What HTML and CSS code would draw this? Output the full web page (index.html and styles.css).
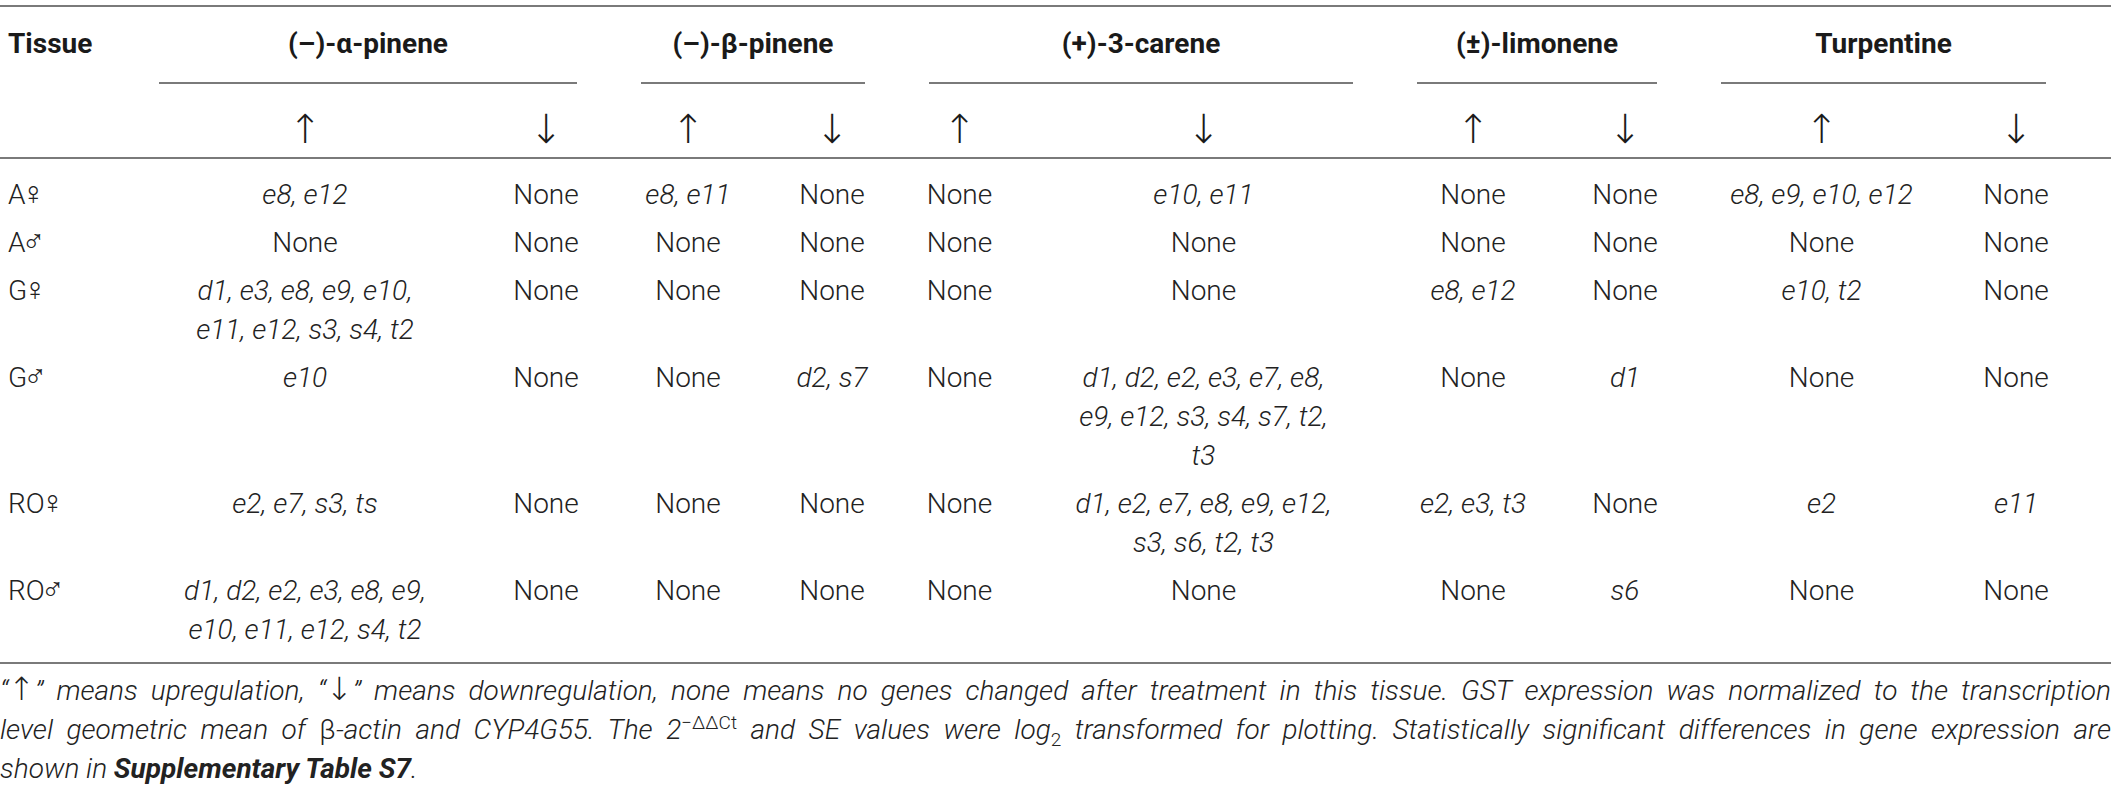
FILE: index.html
```html
<!DOCTYPE html>
<html lang="en">
<head>
    <meta charset="UTF-8">
    <title>GST expression after terpene treatment</title>
    <link rel="stylesheet" href="styles.css">
</head>
<body>
<div class="page">
    <table class="gst">
        <colgroup>
            <col class="c-tissue">
            <col class="c-a-up"><col class="c-a-down">
            <col class="c-b-up"><col class="c-b-down">
            <col class="c-c-up"><col class="c-c-down">
            <col class="c-l-up"><col class="c-l-down">
            <col class="c-t-up"><col class="c-t-down">
        </colgroup>
        <thead>
            <tr class="grp_row">
                <th class="tissue"><div class="grp_plain">Tissue</div></th>
                <th colspan="2"><div class="grp">(–)-α-pinene</div></th>
                <th colspan="2"><div class="grp">(–)-β-pinene</div></th>
                <th colspan="2"><div class="grp">(+)-3-carene</div></th>
                <th colspan="2"><div class="grp">(±)-limonene</div></th>
                <th colspan="2"><div class="grp grp_last">Turpentine</div></th>
            </tr>
            <tr class="dir_row">
                <th></th>
                <th>↑</th><th>↓</th>
                <th>↑</th><th>↓</th>
                <th>↑</th><th>↓</th>
                <th>↑</th><th>↓</th>
                <th>↑</th><th class="last">↓</th>
            </tr>
        </thead>
        <tbody>
            <tr>
                <td class="tissue">A<span class="sex">♀</span></td>
                <td class="gene">e8, e12</td><td>None</td>
                <td class="gene">e8, e11</td><td>None</td>
                <td>None</td><td class="gene">e10, e11</td>
                <td>None</td><td>None</td>
                <td class="gene">e8, e9, e10, e12</td><td class="last">None</td>
            </tr>
            <tr>
                <td class="tissue">A<span class="sex">♂</span></td>
                <td>None</td><td>None</td>
                <td>None</td><td>None</td>
                <td>None</td><td>None</td>
                <td>None</td><td>None</td>
                <td>None</td><td class="last">None</td>
            </tr>
            <tr>
                <td class="tissue">G<span class="sex">♀</span></td>
                <td class="gene">d1, e3, e8, e9, e10,<br>e11, e12, s3, s4, t2</td><td>None</td>
                <td>None</td><td>None</td>
                <td>None</td><td>None</td>
                <td class="gene">e8, e12</td><td>None</td>
                <td class="gene">e10, t2</td><td class="last">None</td>
            </tr>
            <tr>
                <td class="tissue">G<span class="sex">♂</span></td>
                <td class="gene">e10</td><td>None</td>
                <td>None</td><td class="gene">d2, s7</td>
                <td>None</td><td class="gene">d1, d2, e2, e3, e7, e8,<br>e9, e12, s3, s4, s7, t2,<br>t3</td>
                <td>None</td><td class="gene">d1</td>
                <td>None</td><td class="last">None</td>
            </tr>
            <tr>
                <td class="tissue">RO<span class="sex">♀</span></td>
                <td class="gene">e2, e7, s3, ts</td><td>None</td>
                <td>None</td><td>None</td>
                <td>None</td><td class="gene">d1, e2, e7, e8, e9, e12,<br>s3, s6, t2, t3</td>
                <td class="gene">e2, e3, t3</td><td>None</td>
                <td class="gene">e2</td><td class="last gene">e11</td>
            </tr>
            <tr>
                <td class="tissue">RO<span class="sex">♂</span></td>
                <td class="gene">d1, d2, e2, e3, e8, e9,<br>e10, e11, e12, s4, t2</td><td>None</td>
                <td>None</td><td>None</td>
                <td>None</td><td>None</td>
                <td>None</td><td class="gene">s6</td>
                <td>None</td><td class="last">None</td>
            </tr>
        </tbody>
    </table>

    <div class="note">
        <span class="note_line">“<span class="up">↑</span>” means upregulation, “<span class="up">↓</span>” means downregulation, none means no genes changed after treatment in this tissue. GST expression was normalized to the transcription</span>
        <span class="note_line">level geometric mean of <span class="greek">β</span>-actin and CYP4G55. The 2<sup>−ΔΔCt</sup> and SE values were log<sub>2</sub> transformed for plotting. Statistically significant differences in gene expression are</span>
        <span class="note_end">shown in <b>Supplementary Table S7</b>.</span>
    </div>
</div>
</body>
</html>
```

FILE: styles.css
```css
body {
    margin: 0;
    padding-top: 5px;
    background: #fff;
    color: #222;
    font-family: Roboto, "Liberation Sans", sans-serif;
    font-weight: 300;
}
.page {
    width: 2111px;
}

/* table */
.gst {
    width: 2111px;
    table-layout: fixed;
    border-collapse: collapse;
    border-top: 2px solid #7a7a7a;
    font-size: 28px;
    line-height: 39px;
}
.c-tissue { width: 127px; }
.c-a-up { width: 356px; }
.c-a-down { width: 126px; }
.c-b-up { width: 158px; }
.c-b-down { width: 130px; }
.c-c-up { width: 125px; }
.c-c-down { width: 363px; }
.c-l-up { width: 176px; }
.c-l-down { width: 128px; }
.c-t-up { width: 265px; }
.c-t-down { width: 157px; }

th, td {
    padding: 0;
    text-align: center;
    vertical-align: top;
}
th {
    font-weight: 700;
    color: #1a1a1a;
}
.tissue {
    text-align: left;
    padding-left: 8px;
}
.sex {
    font-family: "DejaVu Sans", sans-serif;
    font-weight: 200;
    font-size: 32px;
    line-height: 0;
    margin-left: -4px;
}

/* header rows */
.grp, .grp_plain {
    padding: 17px 0 19px;
}
.grp {
    margin: 0 32px;
    border-bottom: 2px solid #7a7a7a;
}
.grp_last {
    margin-right: 65px;
}
.grp_plain {
    border-bottom: 2px solid transparent;
}
.dir_row th {
    font-family: "DejaVu Sans", sans-serif;
    font-weight: 200;
    font-size: 40px;
    padding: 26px 0 8px;
}
.dir_row th.last {
    padding-right: 33px;
}
thead tr.dir_row {
    border-bottom: 2px solid #7a7a7a;
}

/* body rows */
td {
    padding: 4px 0 5px;
}
td.tissue {
    padding-left: 8px;
}
td.last {
    padding-right: 33px;
}
tbody tr:first-child td {
    padding-top: 16px;
}
tbody tr:last-child td {
    padding-bottom: 13px;
}
tbody tr:last-child {
    border-bottom: 2px solid #7a7a7a;
}
.gene {
    font-style: italic;
}

/* footnote */
.note {
    margin-top: 7px;
    font-size: 28px;
    line-height: 39px;
    font-style: italic;
}
.note_line {
    display: block;
    text-align: justify;
    text-align-last: justify;
}
.note_end {
    display: block;
}
.note .up {
    font-family: "DejaVu Sans", sans-serif;
    font-weight: 200;
    font-style: normal;
    font-size: 32px;
    line-height: 0;
}
.note .greek {
    font-style: normal;
}
.note sup {
    font-style: normal;
    font-size: 19px;
    line-height: 0;
}
.note sub {
    font-style: normal;
    font-size: 19px;
    line-height: 0;
}
.note b {
    font-weight: 700;
}
```
